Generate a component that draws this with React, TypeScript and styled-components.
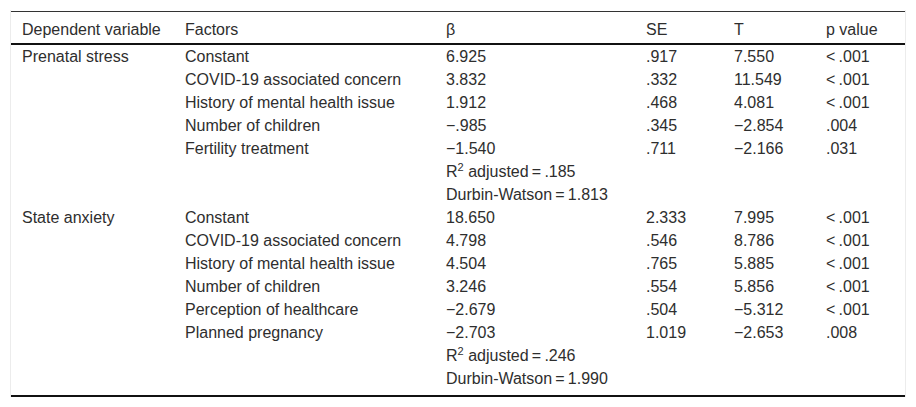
import React from "react";
import styled, { createGlobalStyle } from "styled-components";

type Row = {
  factor?: string;
  beta: React.ReactNode;
  se?: string;
  t?: string;
  p?: string;
};

type Group = {
  variable: string;
  rows: Row[];
};

const TS = "\u2009";
const MINUS = "\u2212";

const fit = (r2: string, dw: string): Row[] => [
  {
    beta: (
      <>
        R<sup>2</sup> adjusted{TS}={TS}
        {r2}
      </>
    ),
  },
  { beta: `Durbin-Watson${TS}=${TS}${dw}` },
];

const groups: Group[] = [
  {
    variable: "Prenatal stress",
    rows: [
      { factor: "Constant", beta: "6.925", se: ".917", t: "7.550", p: `<${TS}.001` },
      { factor: "COVID-19 associated concern", beta: "3.832", se: ".332", t: "11.549", p: `<${TS}.001` },
      { factor: "History of mental health issue", beta: "1.912", se: ".468", t: "4.081", p: `<${TS}.001` },
      { factor: "Number of children", beta: `${MINUS}.985`, se: ".345", t: `${MINUS}2.854`, p: ".004" },
      { factor: "Fertility treatment", beta: `${MINUS}1.540`, se: ".711", t: `${MINUS}2.166`, p: ".031" },
      ...fit(".185", "1.813"),
    ],
  },
  {
    variable: "State anxiety",
    rows: [
      { factor: "Constant", beta: "18.650", se: "2.333", t: "7.995", p: `<${TS}.001` },
      { factor: "COVID-19 associated concern", beta: "4.798", se: ".546", t: "8.786", p: `<${TS}.001` },
      { factor: "History of mental health issue", beta: "4.504", se: ".765", t: "5.885", p: `<${TS}.001` },
      { factor: "Number of children", beta: "3.246", se: ".554", t: "5.856", p: `<${TS}.001` },
      { factor: "Perception of healthcare", beta: `${MINUS}2.679`, se: ".504", t: `${MINUS}5.312`, p: `<${TS}.001` },
      { factor: "Planned pregnancy", beta: `${MINUS}2.703`, se: "1.019", t: `${MINUS}2.653`, p: ".008" },
      ...fit(".246", "1.990"),
    ],
  },
];

const columns = [
  { label: "Dependent variable", width: 163 },
  { label: "Factors", width: 261 },
  { label: "β", width: 200 },
  { label: "SE", width: 88 },
  { label: "T", width: 92 },
  { label: "p value", width: 90 },
];

export default function App() {
  return (
    <>
      <GlobalStyle />
      <TableFrame>
        <Table>
          <colgroup>
            {columns.map((c) => (
              <col key={c.label} style={{ width: c.width }} />
            ))}
          </colgroup>
          <thead>
            <tr>
              {columns.map((c) => (
                <HeadCell key={c.label}>{c.label}</HeadCell>
              ))}
            </tr>
          </thead>
          <tbody>
            {groups.map((g) =>
              g.rows.map((r, i) => (
                <BodyRow key={g.variable + i}>
                  <Cell>{i === 0 ? g.variable : ""}</Cell>
                  <Cell>{r.factor}</Cell>
                  <Cell>{r.beta}</Cell>
                  <Cell>{r.se}</Cell>
                  <Cell>{r.t}</Cell>
                  <Cell>{r.p}</Cell>
                </BodyRow>
              ))
            )}
          </tbody>
        </Table>
      </TableFrame>
    </>
  );
}

const GlobalStyle = createGlobalStyle`
  body {
    margin: 0;
    background: #fff;
    font-family: "Liberation Sans", Arial, sans-serif;
    color: #2e2e2e;
  }
`;

const TableFrame = styled.div`
  margin: 10px 10px 0;
  padding-top: 1px;
  border-left: 1px solid #ececec;
  border-right: 1px solid #ececec;
`;

const Table = styled.table`
  width: 100%;
  table-layout: fixed;
  border-collapse: collapse;
  border-top: 1px solid #333;
  border-bottom: 2px solid #111;
  font-size: 16px;
`;

const HeadCell = styled.th`
  text-align: left;
  font-weight: 400;
  line-height: 23px;
  padding: 6px 0 2px 11px;
  border-bottom: 2px solid #111;
  white-space: nowrap;
`;

const BodyRow = styled.tr`
  &:last-child td {
    padding-bottom: 5px;
  }
`;

const Cell = styled.td`
  line-height: 23px;
  padding: 0 0 0 11px;
  vertical-align: top;
  white-space: nowrap;

  sup {
    font-size: 11px;
    line-height: 0;
  }
`;
